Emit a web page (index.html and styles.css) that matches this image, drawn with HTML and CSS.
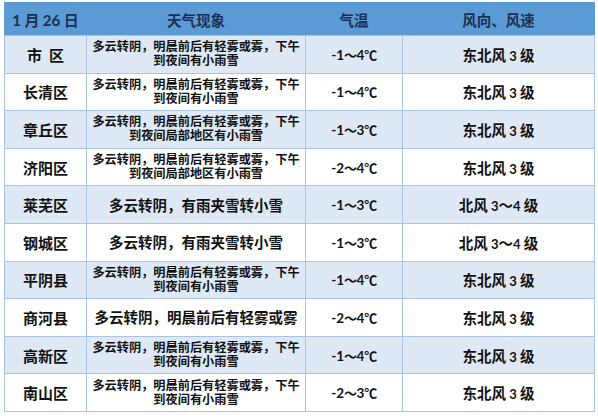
FILE: index.html
```html
<!DOCTYPE html>
<html lang="zh">
<head>
<meta charset="utf-8">
<link rel="stylesheet" href="styles.css">
</head>
<body>
<table class="weather">
  <colgroup>
    <col class="c-area"><col class="c-desc"><col class="c-temp"><col class="c-wind">
  </colgroup>
  <thead>
    <tr class="head">
      <th class="date"><span class="num">1</span> 月 <span class="num">26</span> 日</th>
      <th>天气现象</th>
      <th>气温</th>
      <th>风向、风速</th>
    </tr>
  </thead>
  <tbody>
    <tr class="alt">
      <td class="area">市&nbsp;&nbsp;区</td>
      <td class="desc small"><span class="ln">多云转阴，明晨前后有轻雾或雾，下午</span><span class="ln">到夜间有小雨雪</span></td>
      <td class="temp"><span class="num">-1</span>～<span class="num">4</span>℃</td>
      <td class="wind">东北风 <span class="num">3</span> 级</td>
    </tr>
    <tr>
      <td class="area">长清区</td>
      <td class="desc small"><span class="ln">多云转阴，明晨前后有轻雾或雾，下午</span><span class="ln">到夜间有小雨雪</span></td>
      <td class="temp"><span class="num">-1</span>～<span class="num">4</span>℃</td>
      <td class="wind">东北风 <span class="num">3</span> 级</td>
    </tr>
    <tr class="alt">
      <td class="area">章丘区</td>
      <td class="desc small"><span class="ln">多云转阴，明晨前后有轻雾或雾，下午</span><span class="ln">到夜间局部地区有小雨雪</span></td>
      <td class="temp"><span class="num">-1</span>～<span class="num">3</span>℃</td>
      <td class="wind">东北风 <span class="num">3</span> 级</td>
    </tr>
    <tr>
      <td class="area">济阳区</td>
      <td class="desc small"><span class="ln">多云转阴，明晨前后有轻雾或雾，下午</span><span class="ln">到夜间局部地区有小雨雪</span></td>
      <td class="temp"><span class="num">-2</span>～<span class="num">4</span>℃</td>
      <td class="wind">东北风 <span class="num">3</span> 级</td>
    </tr>
    <tr class="alt">
      <td class="area">莱芜区</td>
      <td class="desc">多云转阴，有雨夹雪转小雪</td>
      <td class="temp"><span class="num">-1</span>～<span class="num">3</span>℃</td>
      <td class="wind">北风 <span class="num">3</span>～<span class="num">4</span> 级</td>
    </tr>
    <tr>
      <td class="area">钢城区</td>
      <td class="desc">多云转阴，有雨夹雪转小雪</td>
      <td class="temp"><span class="num">-1</span>～<span class="num">3</span>℃</td>
      <td class="wind">北风 <span class="num">3</span>～<span class="num">4</span> 级</td>
    </tr>
    <tr class="alt">
      <td class="area">平阴县</td>
      <td class="desc small"><span class="ln">多云转阴，明晨前后有轻雾或雾，下午</span><span class="ln">到夜间有小雨雪</span></td>
      <td class="temp"><span class="num">-1</span>～<span class="num">4</span>℃</td>
      <td class="wind">东北风 <span class="num">3</span> 级</td>
    </tr>
    <tr>
      <td class="area">商河县</td>
      <td class="desc">多云转阴，明晨前后有轻雾或雾</td>
      <td class="temp"><span class="num">-2</span>～<span class="num">4</span>℃</td>
      <td class="wind">东北风 <span class="num">3</span> 级</td>
    </tr>
    <tr class="alt">
      <td class="area">高新区</td>
      <td class="desc small"><span class="ln">多云转阴，明晨前后有轻雾或雾，下午</span><span class="ln">到夜间有小雨雪</span></td>
      <td class="temp"><span class="num">-1</span>～<span class="num">4</span>℃</td>
      <td class="wind">东北风 <span class="num">3</span> 级</td>
    </tr>
    <tr>
      <td class="area">南山区</td>
      <td class="desc small"><span class="ln">多云转阴，明晨前后有轻雾或雾，下午</span><span class="ln">到夜间有小雨雪</span></td>
      <td class="temp"><span class="num">-2</span>～<span class="num">3</span>℃</td>
      <td class="wind">东北风 <span class="num">3</span> 级</td>
    </tr>
  </tbody>
</table>
</body>
</html>
```

FILE: styles.css
```css
html, body {
  margin: 0;
  background: #ffffff;
}
body {
  padding: 2px 4px 0 4px;
  font-family: "Noto Sans CJK SC", "Noto Sans", sans-serif;
  color: #111111;
}
.weather {
  border-collapse: collapse;
  table-layout: fixed;
  width: 590px;
  border: 1px solid #a8c5e6;
}
.c-area { width: 82px; }
.c-desc { width: 219px; }
.c-temp { width: 97px; }
.c-wind { width: 192px; }

.weather th,
.weather td {
  border: 1px solid #a8c5e6;
  padding: 0;
  text-align: center;
  vertical-align: middle;
  font-weight: 700;
}
.head {
  height: 33px;
  background: #5b9bd5;
}
.head th {
  border-color: #5b9bd5;
  color: #1c2f52;
  font-size: 14.5px;
  border-bottom-color: #a8c5e6;
}
.head .date {
  font-size: 15px;
}
.num {
  font-family: "Lato", "Open Sans", sans-serif;
  font-weight: 700;
}
tbody tr {
  height: 37.6px;
}
tbody tr.alt {
  background: #dfe9f5;
}
.area {
  font-size: 15px;
}
.desc {
  font-size: 14.5px;
  line-height: 18px;
}
.desc.small {
  font-family: "Liberation Sans", "Noto Sans CJK SC", sans-serif;
  font-size: 12.2px;
  line-height: 14px;
}
.desc.small .ln {
  display: block;
  height: 14px;
  line-height: 14px;
}
.temp {
  font-size: 13px;
  letter-spacing: -0.5px;
}
.temp .num {
  font-size: 13.5px;
  letter-spacing: 0;
}
.wind {
  font-size: 14.5px;
}
.wind .num {
  font-size: 13px;
}
```
